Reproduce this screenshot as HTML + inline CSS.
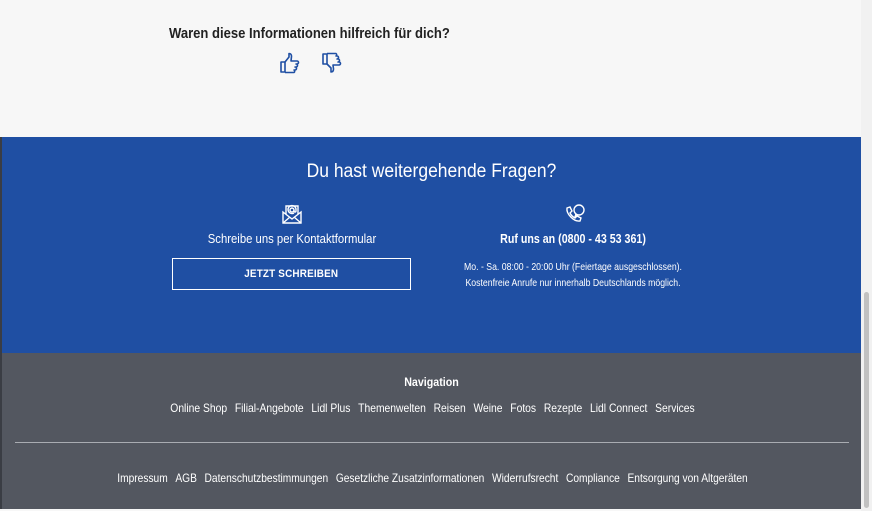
<!DOCTYPE html>
<html><head><meta charset="utf-8"><style>
*{margin:0;padding:0;box-sizing:border-box}
body{width:872px;height:511px;overflow:hidden;background:#f7f7f7;font-family:"Liberation Sans",sans-serif;position:relative}
.abs{position:absolute}
.c{text-align:center;white-space:nowrap}
#top{left:0;top:0;width:861px;height:137px;background:#f7f7f7}
#blue{left:2px;top:137px;width:859px;height:216px;background:#1f4fa3;color:#fff}
#gray{left:2px;top:353px;width:859px;height:156px;background:#535760;color:#fff}
#lb{left:0;top:137px;width:2px;height:372px;background:#3a3d44}
#sb{left:861px;top:0;width:11px;height:511px;background:#f1f1f1}
#thumb{left:864px;top:292px;width:5px;height:216px;background:#c1c1c1;border-radius:3px}
.links span{margin:0 4.5px}
</style></head><body>
<div id="top" class="abs"></div>
<div class="abs" style="left:169px;top:25px;font-size:15px;font-weight:bold;color:#222;white-space:nowrap;transform:scaleX(.87);transform-origin:0 0">Waren diese Informationen hilfreich für dich?</div>
<svg class="abs" style="left:279px;top:52px" width="22" height="22" viewBox="0 0 22 22" fill="none" stroke="#1f4fa3" stroke-width="1.6" stroke-linejoin="round"><path d="M2 10h4v10H2z"/><path d="M6 10l4-5V1.5c1.5 0 2.5 1 2.5 3L12 9h6a1.5 1.5 0 010 3h-1a1.5 1.5 0 010 3h-1a1.5 1.5 0 010 3h-1a1.5 1.5 0 010 2.5H6"/></svg>
<svg class="abs" style="left:321px;top:52px" width="22" height="22" viewBox="0 0 22 22" fill="none" stroke="#1f4fa3" stroke-width="1.6" stroke-linejoin="round"><path d="M2 2h4v10H2z"/><path d="M6 12l4 4v4c1.5 0 2.5-1 2.5-3L12 13h6a1.5 1.5 0 000-3h-1a1.5 1.5 0 000-3h-1a1.5 1.5 0 000-3h-1a1.5 1.5 0 000-2.5H6"/></svg>
<div id="blue" class="abs">
  <div class="abs c" style="left:0;width:859px;top:24px;font-size:19px;transform:scaleX(.92)">Du hast weitergehende Fragen?</div>
  <svg class="abs" style="left:279px;top:66px" width="22" height="22" viewBox="0 0 22 22" fill="none" stroke="#fff" stroke-width="1.4"><path d="M2 9l9 7 9-7v11H2z"/><path d="M2 20l7-6M20 20l-7-6"/><path d="M5 11V3h12v8"/><circle cx="11" cy="7" r="2"/><path d="M13 7v1a1 1 0 002 0V7a4 4 0 10-2 3"/></svg>
  <svg class="abs" style="left:561px;top:66px" width="24" height="22" viewBox="0 0 24 22" fill="none" stroke="#fff" stroke-width="1.4"><path d="M4 5l3-1 2 4-2 2c1 2 3 4 5 5l2-2 4 2-1 3c-6 1-14-7-13-13z"/><circle cx="16" cy="7" r="5"/><path d="M13 11l-1 3 3-2"/></svg>
  <div class="abs c" style="left:170px;width:240px;top:94px;font-size:13px;transform:scaleX(.87)">Schreibe uns per Kontaktformular</div>
  <div class="abs c" style="left:451px;width:240px;top:94px;font-size:13px;font-weight:bold;transform:scaleX(.82)">Ruf uns an (0800 - 43 53 361)</div>
  <div class="abs c" style="left:170px;top:121px;width:239px;height:32px;border:1px solid #fff;font-size:11px;line-height:30px;letter-spacing:.2px"><span style="display:inline-block;transform:scaleX(.9);font-weight:bold">JETZT SCHREIBEN</span></div>
  <div class="abs c" style="left:421px;width:300px;top:122px;font-size:10.5px;line-height:16px;transform:scaleX(.83)">Mo. - Sa. 08:00 - 20:00 Uhr (Feiertage ausgeschlossen).<br>Kostenfreie Anrufe nur innerhalb Deutschlands möglich.</div>
</div>
<div id="gray" class="abs">
  <div class="abs c" style="left:0;width:859px;top:22px;font-size:12px;font-weight:bold;transform:scaleX(.89)">Navigation</div>
  <div class="abs c links" style="left:0;width:861px;top:48px;font-size:12px;transform:scaleX(.86)">
    <span>Online Shop</span><span>Filial-Angebote</span><span>Lidl Plus</span><span>Themenwelten</span><span>Reisen</span><span>Weine</span><span>Fotos</span><span>Rezepte</span><span>Lidl Connect</span><span>Services</span></div>
  <div class="abs" style="left:13px;top:89px;width:834px;height:1px;background:#a9acb2"></div>
  <div class="abs c links" style="left:0;width:861px;top:118px;font-size:12px;transform:scaleX(.85)">
    <span>Impressum</span><span>AGB</span><span>Datenschutzbestimmungen</span><span>Gesetzliche Zusatzinformationen</span><span>Widerrufsrecht</span><span>Compliance</span><span>Entsorgung von Altgeräten</span></div>
</div>
<div id="lb" class="abs"></div>
<div id="sb" class="abs"></div>
<div id="thumb" class="abs"></div>
</body></html>
